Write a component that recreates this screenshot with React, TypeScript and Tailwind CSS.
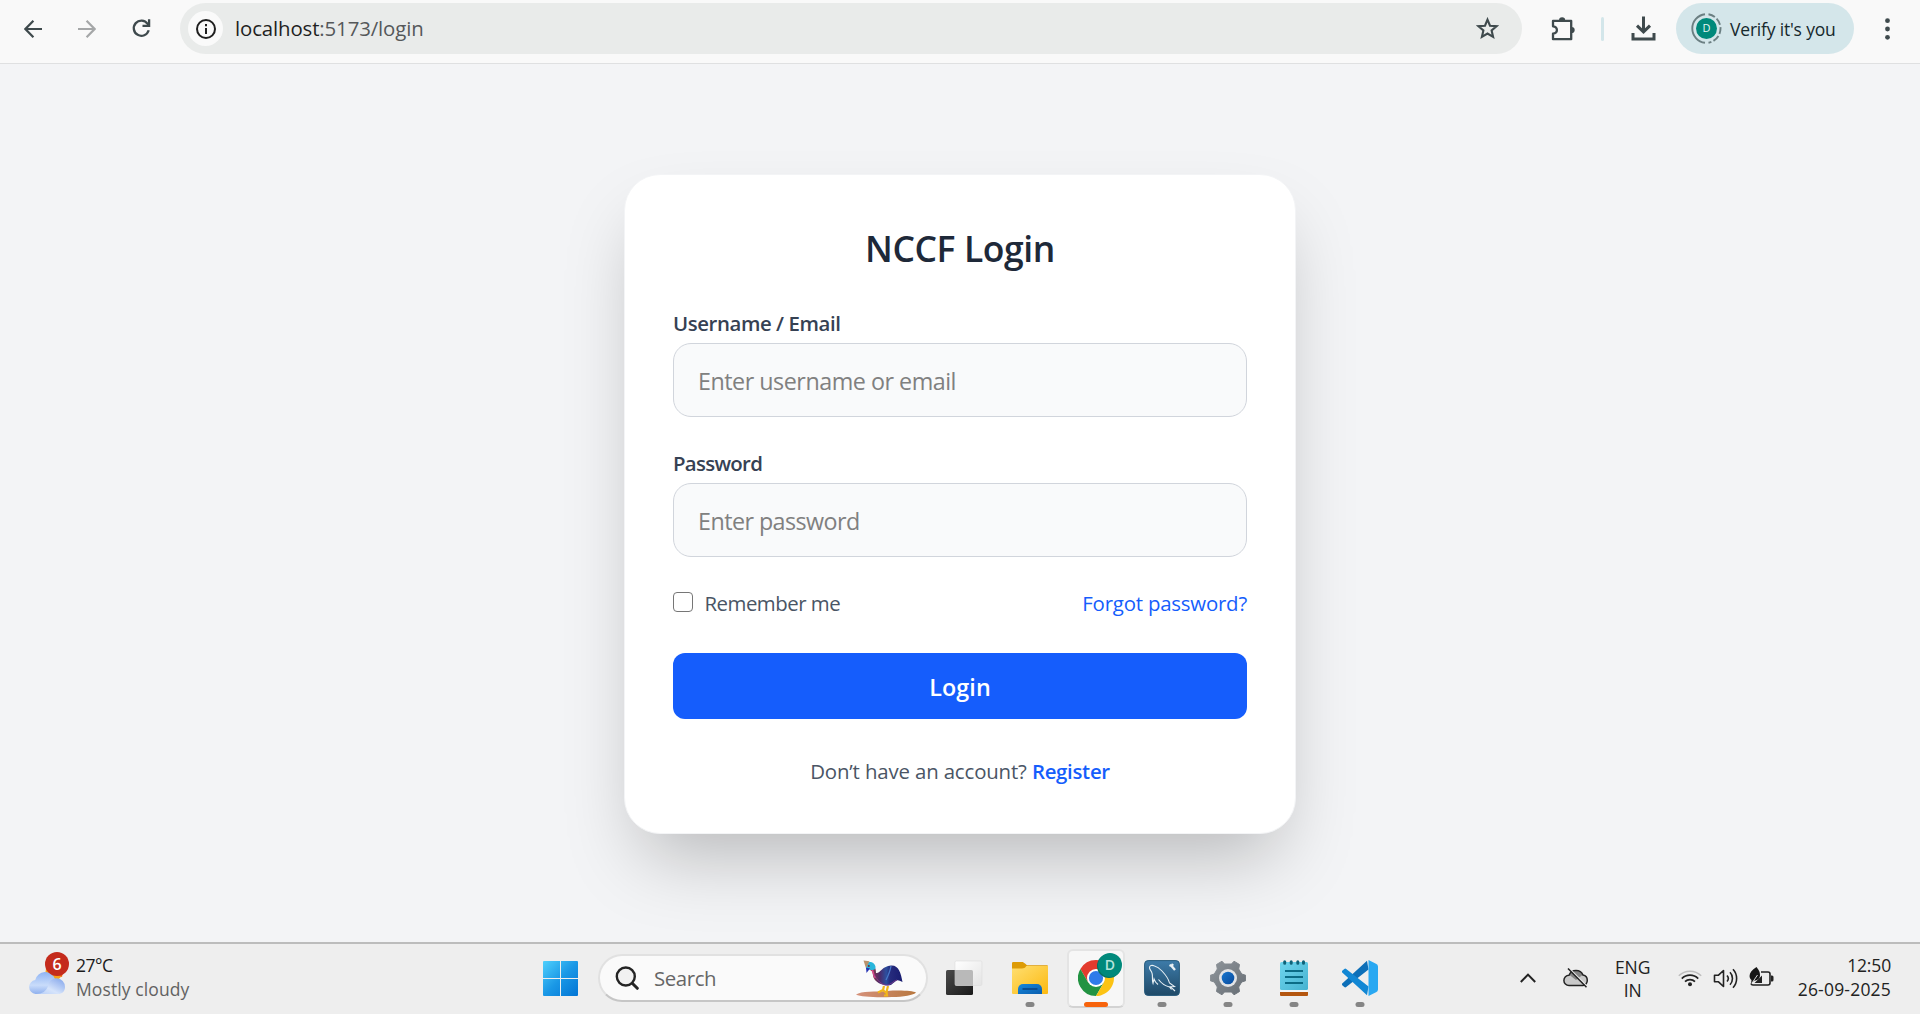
import React from "react";

function Toolbar() {
  return (
    <header className="flex h-16 shrink-0 items-start border-b border-[#dfe0e1] bg-[#f9f9f9] pt-[3px] text-[#3f4a4d]">
      <nav className="flex h-[51px] w-[180px] shrink-0 items-center">
        <svg className="ml-6 size-[18px]" viewBox="0 0 18 18" fill="none" stroke="currentColor" strokeWidth="2.2">
          <path d="M18 9H1.6M9.4.8 1.4 9l8 8.2" />
        </svg>
        <svg className="ml-9 size-[18px] text-[#a5a7a8]" viewBox="0 0 18 18" fill="none" stroke="currentColor" strokeWidth="2.2">
          <path d="M0 9h16.4M8.6.8l8 8.2-8 8.2" />
        </svg>
        <svg className="ml-9 size-[19px]" viewBox="0 0 19 19" fill="none" stroke="currentColor" strokeWidth="2.3">
          <path d="M16.7 11.3A7.6 7.6 0 1 1 15.6 4.8L17 6.3" />
          <path d="M17.1.3v6.6h-6.6" />
        </svg>
      </nav>
      <div className="flex h-[51px] w-[1342px] shrink-0 items-center rounded-full bg-[#e9ebea] pl-2">
        <div className="flex size-[35px] items-center justify-center rounded-full bg-[#fafafa]">
          <svg className="size-5 text-[#1f1f1f]" viewBox="0 0 20 20" fill="none" stroke="currentColor" strokeWidth="2">
            <circle cx="10" cy="10" r="9" />
            <path d="M10 9v6M10 5v2.2" />
          </svg>
        </div>
        <div className="mb-[2px] ml-[12px] text-[20.4px] leading-7 tracking-[-0.12px] text-[#55585a]">
          <span className="text-[#1f1f1f]">localhost</span>:5173/login
        </div>
        <svg className="ml-auto mr-[23px] size-[23px]" viewBox="0 0 23 23" fill="none" stroke="currentColor" strokeWidth="2.1">
          <path d="m11.5 2.600 2.500 6.100 6.600.5-5 4.300 1.500 6.400-5.600-3.400-5.600 3.400 1.500-6.400-5-4.300 6.600-.5z" />
        </svg>
      </div>
      <div className="flex h-[51px] grow items-center">
        <svg className="ml-[28px] size-[26px]" viewBox="0 0 26 26" fill="none" stroke="currentColor" strokeWidth="2.3">
          <path d="M3 4.900h18.200v18.300H3v-5.500c5.200-.6 5.200-6.700 0-7.400z" strokeLinejoin="round" />
          <path d="M9 4.400a3.100 3.100 0 0 1 6.200 0zM21.600 10.900a3.100 3.100 0 0 1 0 6.200z" fill="currentColor" stroke="none" />
        </svg>
        <div className="ml-[25px] h-6 w-[3px] rounded-full bg-[#d3e6ea]" />
        <svg className="ml-[27px] size-[25px]" viewBox="0 0 25 25" fill="none" stroke="currentColor" strokeWidth="3">
          <path d="M12.500.5v15M6 9.600l6.500 6.300L19 9.600M2 17v6h21v-6" />
        </svg>
        <div className="ml-5 flex h-[51px] w-[178px] items-center rounded-full bg-[#d4e6ea]">
          <div className="relative ml-[15px] flex size-[31px] items-center justify-center">
            <svg className="absolute inset-0 size-[31px] text-[#6b7f82]" viewBox="0 0 31 31" fill="none" stroke="currentColor" strokeWidth="1.9">
              <path d="M14 1.200A14.400 14.400 0 0 0 14 29.800" />
              <path d="M17.500 1.300A14.400 14.400 0 0 1 17.500 29.700" strokeDasharray="7 2.3" />
            </svg>
            <span className="flex size-[21px] items-center justify-center rounded-full bg-[#00897b] text-[11px] text-[#e6f6f4]">D</span>
          </div>
          <span className="ml-[8px] text-[17.5px] leading-6 tracking-[-0.19px] text-[#16292d]">Verify it's you</span>
        </div>
        <svg className="ml-[31px] h-[22px] w-[5px]" viewBox="0 0 5 22" fill="currentColor">
          <circle cx="2.5" cy="2.7" r="2.4" />
          <circle cx="2.5" cy="11" r="2.4" />
          <circle cx="2.5" cy="19.3" r="2.4" />
        </svg>
      </div>
    </header>
  );
}

function LoginCard() {
  return (
    <form className="flex h-[660px] w-[672px] flex-col rounded-[36px] border border-gray-100 bg-white px-12 pt-12 shadow-[0_37.5px_75px_-18px_rgba(0,0,0,0.25)]">
      <h1 className="shrink-0 text-center text-[35.5px] font-semibold leading-[50px] tracking-[-0.4px] text-gray-800">NCCF Login</h1>
      <label className="mt-[35px] text-[20.4px] font-semibold leading-[30px] tracking-[-0.42px] text-gray-700">Username / Email</label>
      <input
        className="mt-[5px] h-[74px] shrink-0 rounded-[18px] border border-gray-300 bg-gray-50 px-6 pt-[2px] text-[23.3px] tracking-[-0.48px] placeholder:text-[#808080]"
        placeholder="Enter username or email"
      />
      <label className="mt-[31px] text-[20.4px] font-semibold leading-[30px] tracking-[-0.7px] text-gray-700">Password</label>
      <input
        className="mt-[5px] h-[74px] shrink-0 rounded-[18px] border border-gray-300 bg-gray-50 px-6 pt-[2px] text-[23.3px] tracking-[-0.55px] placeholder:text-[#808080]"
        placeholder="Enter password"
      />
      <div className="mt-[30px] flex h-8 shrink-0 items-center justify-between text-[20.4px] leading-8">
        <div className="flex items-center text-gray-600">
          <span className="mb-[2px] size-5 rounded-[4px] border-[1.5px] border-[#767676] bg-white" />
          <span className="ml-[11.5px] tracking-[-0.5px]">Remember me</span>
        </div>
        <a className="tracking-[-0.2px] text-[#155dfc]">Forgot password?</a>
      </div>
      <button type="button" className="mt-[34px] h-[66px] shrink-0 rounded-xl bg-[#155dfc] pt-[2px] text-[23.3px] font-semibold tracking-[0.1px] text-white">
        Login
      </button>
      <p className="mt-[36px] text-center text-[20.4px] leading-8 tracking-[-0.14px] text-gray-600">
        Don’t have an account? <a className="font-semibold tracking-[-0.3px] text-[#155dfc]">Register</a>
      </p>
    </form>
  );
}

function Dot() {
  return <span className="absolute -bottom-[11px] left-1/2 h-[5px] w-[9px] -translate-x-1/2 rounded-full bg-[#858585]" />;
}

function Weather() {
  return (
    <div className="flex w-[543px] shrink-0 items-center pb-px">
      <div className="relative mb-[7px] ml-7 h-[44px] w-[42px]">
        <svg className="absolute left-0 top-[11px] h-[32px] w-[38px]" viewBox="0 0 38 32">
          <defs>
            <linearGradient id="cloud" x1="0" y1="0" x2="0" y2="1">
              <stop offset="0" stopColor="#8fb4f3" />
              <stop offset=".6" stopColor="#c9dcfa" />
              <stop offset="1" stopColor="#8fb0ee" />
            </linearGradient>
            <linearGradient id="cloudFront" x1="1" y1="0" x2="0" y2="1">
              <stop offset="0" stopColor="#7fa2ea" />
              <stop offset=".6" stopColor="#d6e4fb" />
              <stop offset="1" stopColor="#b5cdf7" />
            </linearGradient>
          </defs>
          <circle cx="26" cy="9" r="8.5" fill="#f7a11a" />
          <path d="M28 3a9 9 0 0 1 7 6l-1 5-8-3z" fill="#f4650f" />
          <path d="M7.500 31A7 7 0 0 1 7.200 17.100 10.300 10.300 0 0 1 27 16l1 15z" fill="url(#cloud)" />
          <path d="M8 31c6.500 0 10-3 12-7.500a8.500 8.500 0 0 1 17 .5c0 4.500-3 7-7 7z" fill="url(#cloudFront)" />
        </svg>
        <span className="absolute left-[17px] top-0 flex size-6 items-center justify-center rounded-full bg-[#c42b1c] text-[16px] font-semibold text-white">6</span>
      </div>
      <div className="mb-px ml-[6px] flex flex-col text-[17.5px] leading-6">
        <span className="tracking-[-0.5px] text-[#1b1b1b]">27°C</span>
        <span className="tracking-[0.1px] text-[#626262]">Mostly cloudy</span>
      </div>
    </div>
  );
}

function Search() {
  return (
    <div className="ml-5 flex h-12 w-[330px] shrink-0 items-center rounded-full border-2 border-[#e1e1e1] border-b-[#c6c6c6] bg-[#fafafa]">
      <svg className="ml-[15px] size-[24px]" viewBox="0 0 24 24" fill="none" stroke="#242424" strokeWidth="2.4" strokeLinecap="round">
        <circle cx="10.8" cy="10.5" r="9" fill="#f1f1f1" />
        <path d="m17.500 17.500 4.800 4.800" strokeWidth="3" />
      </svg>
      <span className="ml-[15px] text-[20.4px] leading-7 tracking-[-0.4px] text-[#666]">Search</span>
      <svg className="ml-auto mr-[10px] mt-[1px] h-[38px] w-[60px]" viewBox="0 0 60 38">
        <defs>
          <linearGradient id="ground">
            <stop offset="0" stopColor="#d5917a" />
            <stop offset="1" stopColor="#b87840" />
          </linearGradient>
          <linearGradient id="plumage">
            <stop offset="0" stopColor="#94403e" />
            <stop offset=".3" stopColor="#4b2a6a" />
            <stop offset=".5" stopColor="#2c4f9e" />
            <stop offset=".62" stopColor="#262b7d" />
            <stop offset="1" stopColor="#181c70" />
          </linearGradient>
        </defs>
        <path d="M0 34.500C5 31 20 32 31 31c14-1 26 0 29 1.500-2 2.500-13 4.500-24 4.500-16 .5-31 0-36-2.500z" fill="url(#ground)" />
        <path d="m28 26-1 4-5 2.500M32 26l-1.500 6 .5 3.500h-3M30.500 33l-3-2.500" fill="none" stroke="#f2b619" strokeWidth="2.2" />
        <path d="M14 6c5-1 6 3 6 7 4 1 6-7 15-7.500 8-.5 10 8 11.500 16.500-3-1-4-2-5.500-1.500-3 1-5 5.500-9.500 5-6-.5-12-3-14-8C16.500 13 17 11 14 10z" fill="url(#plumage)" />
        <path d="M15 8c3 2 1 6 4.500 10" fill="none" stroke="#d8498a" strokeWidth="1.6" />
        <path d="M18 14c2 4 5 9 11 11 5 1 8-4 12-5" fill="none" stroke="#8a3a8a" strokeWidth=".8" />
        <path d="M35 6c-1 6-3 10-5 14" fill="none" stroke="#4878c8" strokeWidth="1.3" />
        <path d="M10 4c4-4 9-1 9.500 3 0 3-2 3-4.500 3l-4.500-1z" fill="#29b6dc" />
        <path d="m7.500.5 6 .8-3.500 7z" fill="#b9926c" />
        <path d="m10 7.500 4 1-3.500 4.500z" fill="#2331b5" />
        <circle cx="12.8" cy="6" r="1" fill="#7d2a2a" />
      </svg>
    </div>
  );
}

function TaskIcons() {
  return (
    <div className="flex items-center">
      <svg className="ml-[18px] h-[36px] w-[37px]" viewBox="0 0 37 36">
        <defs>
          <linearGradient id="tvDark" x1="0" y1="0" x2="1" y2="1">
            <stop offset="0" stopColor="#4a4a4a" />
            <stop offset="1" stopColor="#1a1a1a" />
          </linearGradient>
          <linearGradient id="tvLight" x1="0" y1="0" x2="1" y2="1">
            <stop offset="0" stopColor="#fff" />
            <stop offset="1" stopColor="#e4e4e4" />
          </linearGradient>
        </defs>
        <rect x="0" y="10" width="27" height="25" rx="1.5" fill="url(#tvDark)" />
        <rect x="9" y="1" width="27" height="24.5" rx="1.5" fill="url(#tvLight)" stroke="#dcdcdc" strokeWidth=".6" />
        <path d="M9 10h16.500a1.500 1.500 0 0 1 1.500 1.500v14H10.500A1.500 1.500 0 0 1 9 24z" fill="#b9b9b9" />
      </svg>
      <div className="relative ml-[29px] size-9">
        <svg className="size-9" viewBox="0 0 36 36">
          <defs>
            <linearGradient id="folder" x1="0" y1="0" x2="1" y2="1">
              <stop offset="0" stopColor="#ffdf71" />
              <stop offset="1" stopColor="#fcb910" />
            </linearGradient>
            <linearGradient id="folderTab" x1="0" y1="0" x2="1" y2="1">
              <stop offset="0" stopColor="#1587dc" />
              <stop offset="1" stopColor="#0b5eae" />
            </linearGradient>
          </defs>
          <path d="M0 3.200a1.200 1.200 0 0 1 1.200-1.200h8.500c1.500 0 2.300.6 3.300 1.500l2 1.800h20a1 1 0 0 1 1 1V12H0z" fill="#dd9b06" />
          <path d="M0 8.500h10c2 0 3-.7 4.300-2.500H36v27a1 1 0 0 1-1 1H1a1 1 0 0 1-1-1z" fill="url(#folder)" />
          <path d="M6 34v-5a5 5 0 0 1 5-5h14a5 5 0 0 1 5 5v5z" fill="url(#folderTab)" />
          <path d="M10.500 29h15" stroke="#0a4a8f" strokeWidth="1.8" />
        </svg>
        <Dot />
      </div>
      <div className="relative ml-[19px] flex h-[59px] w-[58px] items-center justify-center rounded-md border-2 border-[#e4e4e4] border-b-[#d3d3d3] bg-[#f7f7f7]">
        <svg className="size-9" viewBox="0 0 36 36">
          <path d="M10.200 22.500 2.410 9A18 18 0 0 1 33.680 9.200H18z" fill="#e33b2e" />
          <path d="M25.800 22.500 18 36A18 18 0 0 1 2.410 9L10.200 22.500z" fill="#229342" />
          <path d="M18 9.200h15.680A18 18 0 0 1 18 36l7.800-13.500z" fill="#fcc314" />
          <circle cx="18" cy="18" r="9" fill="#fff" />
          <circle cx="18" cy="18" r="7.1" fill="#2f7bea" />
        </svg>
        <span className="absolute left-[28px] top-[3px] size-6 rounded-full bg-[#04705f]" />
        <span className="absolute left-[29px] top-[2px] flex size-6 items-center justify-center rounded-full bg-[#00897b] text-[14px] font-semibold text-[#b5e4db]">D</span>
        <span className="absolute -bottom-px left-[15px] h-[5px] w-6 rounded-full bg-[#f7630c]" />
      </div>
      <div className="relative ml-[19px] size-9">
        <svg className="size-9" viewBox="0 0 36 36">
          <defs>
            <linearGradient id="sql" x1="0" y1="0" x2="0" y2="1">
              <stop offset="0" stopColor="#3d7ba9" />
              <stop offset="1" stopColor="#1f4967" />
            </linearGradient>
          </defs>
          <rect x=".6" y=".6" width="34.8" height="34.8" rx="3.5" fill="url(#sql)" stroke="#255a7c" />
          <path d="M14 24.500c-2-1.500-3.300-3.300-4-5.500l-1 4.300C7.800 20 9 16 8 13 7.300 10.500 5.300 9.500 5.500 7.500 5.600 5.500 8 5 10 5.800c3 .8 5.500 2.500 8 5.200 4 4.300 6.500 7.500 7.500 12l5 3.500-4 .3 4.500 4.200M14.500 19.500c3 4 7 6.500 11 7.500l2 2.500" fill="none" stroke="#e8f0f5" strokeWidth="1.1" />
          <path d="m25.500 5 2 1 3.500 4M27.500 6l1.500-2" stroke="#e8f0f5" strokeWidth="2.4" fill="none" />
        </svg>
        <Dot />
      </div>
      <div className="relative ml-[30px] size-9">
        <svg className="size-9" viewBox="0 0 36 36">
          <defs>
            <linearGradient id="gear" x1="0" y1="0" x2="1" y2="1">
              <stop offset="0" stopColor="#8f959b" />
              <stop offset="1" stopColor="#666d74" />
            </linearGradient>
            <linearGradient id="hub" x1="0" y1="0" x2="1" y2="1">
              <stop offset="0" stopColor="#1877cf" />
              <stop offset="1" stopColor="#0a4a9c" />
            </linearGradient>
          </defs>
          <path d="M12 1.200 14.500 4h7L24 1.200l5.500 3.300-.8 4.500 3 5 4 1.300v5.400l-4 1.300-3 5 .8 4.500L24 34.800 21.500 32h-7L12 34.800l-5.500-3.300.8-4.500-3-5-4-1.300v-5.400l4-1.300 3-5-.8-4.500z" fill="url(#gear)" stroke="url(#gear)" strokeLinejoin="round" />
          <circle cx="18" cy="18" r="9" fill="#e3e4e6" />
          <circle cx="18" cy="18" r="6.3" fill="url(#hub)" />
        </svg>
        <Dot />
      </div>
      <div className="relative ml-[30px] size-9">
        <svg className="size-9" viewBox="0 0 36 36">
          <defs>
            <linearGradient id="note" x1="0" y1="0" x2="1" y2="1">
              <stop offset="0" stopColor="#6fd6ee" />
              <stop offset="1" stopColor="#45b2d0" />
            </linearGradient>
          </defs>
          <rect x="4" y="29" width="28" height="7" rx="1" fill="#b4560f" />
          <rect x="4" y="28" width="28" height="4" fill="#f4f4f4" />
          <rect x="4" y="2" width="28" height="28" rx="1.5" fill="url(#note)" />
          <path d="M9 11h18M9 17h18M9 23h18" stroke="#0b6c86" strokeWidth="2" />
          <path d="M8.700 1.800v1.400M15.200 1.800v1.400M21.800 1.800v1.400M27.500 1.800v1.400" stroke="#0e6278" strokeWidth="3" strokeLinecap="round" />
        </svg>
        <Dot />
      </div>
      <div className="relative ml-[30px] size-9">
        <svg className="size-9" viewBox="0 0 36 36">
          <path d="M26.500 9.500 4.200 27.100a1.500 1.500 0 0 1-1.900-.1L.5 25.400a1.500 1.500 0 0 1 0-2.200L25 .8z" fill="#0d6fb8" />
          <path d="M26.500 26.500 4.200 8.900a1.500 1.500 0 0 0-1.900.1L.5 10.600a1.500 1.500 0 0 0 0 2.200L25 35.200z" fill="#1287d4" />
          <path d="M26.500 0 34 3.800a3 3 0 0 1 2 2.700v23a3 3 0 0 1-2 2.700L26.500 36z" fill="#29a8f2" />
        </svg>
        <Dot />
      </div>
    </div>
  );
}

function Tray() {
  return (
    <div className="ml-auto flex items-center pr-[29px] text-[#222]">
      <svg className="mr-[27px] h-[10px] w-4" viewBox="0 0 16 10" fill="none" stroke="currentColor" strokeWidth="2">
        <path d="m.8 9 7.200-7.400L15.200 9" />
      </svg>
      <svg className="mr-[26px] h-[20px] w-[26px]" viewBox="0 0 26 20">
        <path d="M6 17.500a5 5 0 0 1 0-10.200 7.600 7.600 0 0 1 14-.2 5.300 5.300 0 0 1 0 10.400z" fill="#c9c9c9" />
        <path d="M6.500 7a7.300 7.300 0 0 1 13 0L13 12z" fill="#858585" />
        <path d="M6 17.500a5 5 0 0 1 0-10.200 7.600 7.600 0 0 1 14-.2 5.300 5.300 0 0 1 0 10.400z" fill="none" stroke="#222" strokeWidth="1.5" />
        <path d="m6 .2 18.500 18.500" stroke="#eee" strokeWidth="1.5" />
        <path d="m5 .5 18.500 18.800" stroke="#222" strokeWidth="1.5" />
      </svg>
      <div className="mt-[2px] flex w-[36px] flex-col items-center text-[17.5px] leading-[23px]">
        <span>ENG</span>
        <span>IN</span>
      </div>
      <svg className="ml-[27px] h-[18px] w-6" viewBox="0 0 24 18" fill="none" stroke="currentColor" strokeWidth="1.7">
        <path d="M.8 6.800a15.800 15.800 0 0 1 22.400 0" stroke="#bdbdbd" strokeWidth="1.5" />
        <path d="M3.800 9.600a11.600 11.600 0 0 1 16.400 0M7 12.700a7 7 0 0 1 10 0" />
        <circle cx="12" cy="15.3" r="2" fill="currentColor" stroke="none" />
      </svg>
      <svg className="ml-[11px] h-[21px] w-[26px]" viewBox="0 0 26 21" fill="none" stroke="currentColor" strokeWidth="1.6" strokeLinejoin="round">
        <path d="M1.500 7.200h4l5-4.700v16l-5-4.700h-4z" />
        <path d="M14 7.500a4.500 4.500 0 0 1 0 6M17 4.300a9 9 0 0 1 0 12.400M20 1.300a13.500 13.500 0 0 1 0 18.400" />
      </svg>
      <svg className="mb-[3px] ml-[10px] h-[20px] w-[25px]" viewBox="0 0 25 20">
        <path d="M12 5h7a2 2 0 0 1 2 2v9a2 2 0 0 1-2 2H4a2 2 0 0 1-2-1.500" fill="none" stroke="#222" strokeWidth="1.6" />
        <path d="M22 8.500h1a1.500 1.500 0 0 1 1.500 1.500v3a1.500 1.500 0 0 1-1.500 1.500h-1z" fill="#222" />
        <path d="M5.500 16H13V8.500z" fill="#222" />
        <path d="M7.500 0c2 3 3.500 4 3.500 8 0 3-2 5.500-5.500 5.500L2 16.500l.5-3.500C-1 10 0 4.500 7.500 0z" fill="#161616" />
        <path d="M3 16 8.500 8" stroke="#eee" strokeWidth=".9" />
      </svg>
      <div className="mb-[2px] ml-[24px] flex flex-col items-end text-[17.5px] leading-6">
        <span className="tracking-[-0.15px]">12:50</span>
        <span className="tracking-[0.2px]">26-09-2025</span>
      </div>
    </div>
  );
}

export default function App() {
  return (
    <div className="flex h-[1014px] w-[1920px] flex-col overflow-hidden bg-gray-100 font-['Open_Sans','Noto_Sans',sans-serif]">
      <Toolbar />
      <main className="flex h-[878px] shrink-0 justify-center overflow-hidden pt-[110px]">
        <LoginCard />
      </main>
      <footer className="flex h-[72px] shrink-0 items-center border-t-2 border-[#bcbcbc] bg-[#eee] pb-[2px]">
        <Weather />
        <svg className="size-[35px] shrink-0" viewBox="0 0 35 35">
          <defs>
            <linearGradient id="win" gradientUnits="userSpaceOnUse" x1="0" y1="0" x2="35" y2="35">
              <stop offset="0" stopColor="#4fd0fc" />
              <stop offset=".5" stopColor="#1a98e6" />
              <stop offset="1" stopColor="#0274d4" />
            </linearGradient>
          </defs>
          <path d="M1 0h16v17H0V1a1 1 0 0 1 1-1zM18 0h16a1 1 0 0 1 1 1v16H18zM0 18h17v17H1a1 1 0 0 1-1-1zM18 18h17v16a1 1 0 0 1-1 1H18z" fill="url(#win)" />
        </svg>
        <Search />
        <TaskIcons />
        <Tray />
      </footer>
    </div>
  );
}
